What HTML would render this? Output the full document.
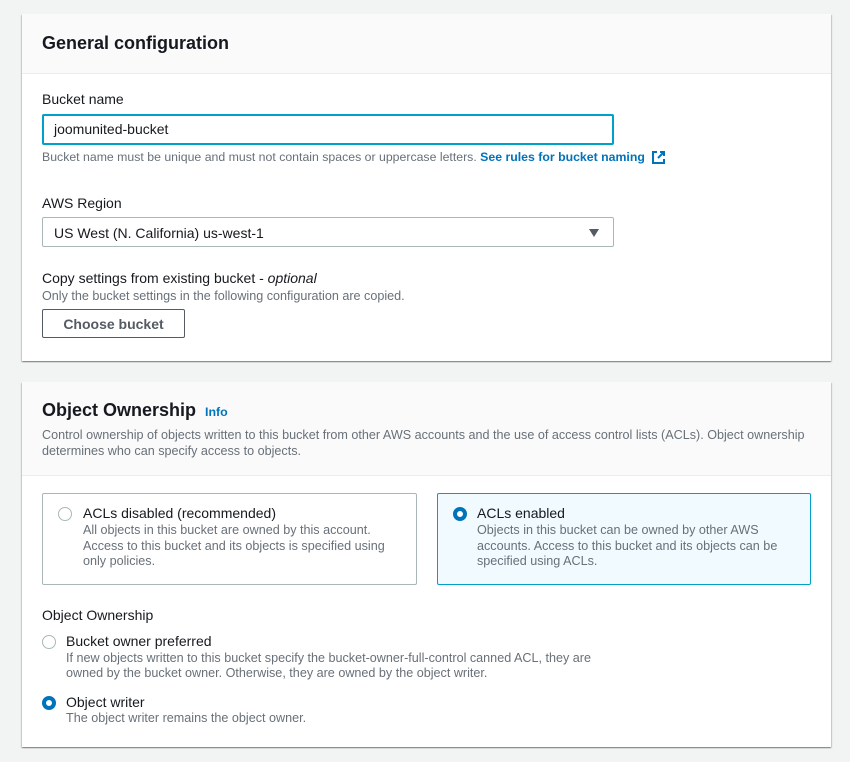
<!DOCTYPE html>
<html><head><meta charset="utf-8"><style>
*{margin:0;padding:0;box-sizing:border-box}
body{width:850px;height:762px;background:#f2f3f3;font-family:"Liberation Sans",Arial,sans-serif;color:#16191f;position:relative;overflow:hidden}
.card{position:absolute;left:22px;width:809px;background:#fff;box-shadow:0 1px 1px rgba(0,28,36,.35),1px 1px 1px rgba(0,28,36,.15),-1px 1px 1px rgba(0,28,36,.15)}
.hdr{position:absolute;left:0;top:0;width:100%;background:#fafafa;border-bottom:1px solid #eaeded}
.t{position:absolute;white-space:nowrap}
.s{font-size:12.6px;color:#687078}
.l{font-size:14px;color:#16191f}
.box{position:absolute;border:1px solid #aab7b8;border-radius:2px;background:#fff}
.radio{position:absolute;width:14px;height:14px;border-radius:50%;border:1.5px solid #aab7b8;background:#fff}
.radio.on{border:4px solid #0073bb}
</style></head><body>

<div class="card" style="top:14px;height:347px">
  <div class="hdr" style="height:60px"></div>
  <div class="t" style="left:20px;top:19px;font-size:18px;font-weight:bold">General configuration</div>
  <div class="t l" style="left:20px;top:77px">Bucket name</div>
  <div class="box" style="left:20px;top:100px;width:572px;height:31px;border:2px solid #00a1c9"></div>
  <div class="t l" style="left:32px;top:107px">joomunited-bucket</div>
  <div class="t s" style="left:20px;top:136px;font-size:12.3px">Bucket name must be unique and must not contain spaces or uppercase letters. <b style="color:#0073bb">See rules for bucket naming</b><svg style="vertical-align:-4px;margin-left:6px" width="15" height="15" viewBox="0 0 15 15"><path d="M6 2H2v11h11V9" fill="none" stroke="#0073bb" stroke-width="2"/><path d="M9 2h4v4M13 2L7 8" fill="none" stroke="#0073bb" stroke-width="2"/></svg></div>
  <div class="t l" style="left:20px;top:181px">AWS Region</div>
  <div class="box" style="left:20px;top:203px;width:572px;height:30px"></div>
  <div class="t l" style="left:32px;top:211px">US West (N. California) us-west-1</div>
  <div style="position:absolute;left:567px;top:215px;width:0;height:0;border-left:5px solid transparent;border-right:5px solid transparent;border-top:8px solid #545b64"></div>
  <div class="t l" style="left:20px;top:256px">Copy settings from existing bucket - <i>optional</i></div>
  <div class="t s" style="left:20px;top:275px">Only the bucket settings in the following configuration are copied.</div>
  <div class="box" style="left:20px;top:295px;width:143px;height:29px;border:1px solid #545b64"></div>
  <div class="t" style="left:20px;top:302px;width:143px;text-align:center;font-size:14px;font-weight:bold;color:#545b64">Choose bucket</div>
</div>

<div class="card" style="top:382px;height:365px">
  <div class="hdr" style="height:94px"></div>
  <div class="t" style="left:20px;top:18px;font-size:18px;font-weight:bold">Object Ownership <span style="font-size:12.4px;color:#0073bb;margin-left:4px">Info</span></div>
  <div class="t s" style="left:20px;top:45px;line-height:16px">Control ownership of objects written to this bucket from other AWS accounts and the use of access control lists (ACLs). Object ownership<br>determines who can specify access to objects.</div>

  <div class="box" style="left:20px;top:111px;width:375px;height:92px"></div>
  <div class="radio" style="left:36px;top:125px"></div>
  <div class="t l" style="left:61px;top:123px">ACLs disabled (recommended)</div>
  <div class="t s" style="left:61px;top:141px;line-height:15.5px">All objects in this bucket are owned by this account.<br>Access to this bucket and its objects is specified using<br>only policies.</div>

  <div class="box" style="left:415px;top:111px;width:374px;height:92px;background:#f1faff;border-color:#00a1c9"></div>
  <div class="radio on" style="left:431px;top:125px"></div>
  <div class="t l" style="left:455px;top:123px">ACLs enabled</div>
  <div class="t s" style="left:455px;top:141px;line-height:15.5px">Objects in this bucket can be owned by other AWS<br>accounts. Access to this bucket and its objects can be<br>specified using ACLs.</div>

  <div class="t l" style="left:20px;top:225px">Object Ownership</div>
  <div class="radio" style="left:20px;top:253px"></div>
  <div class="t l" style="left:44px;top:251px">Bucket owner preferred</div>
  <div class="t s" style="left:44px;top:269px;line-height:15px">If new objects written to this bucket specify the bucket-owner-full-control canned ACL, they are<br>owned by the bucket owner. Otherwise, they are owned by the object writer.</div>
  <div class="radio on" style="left:20px;top:314px"></div>
  <div class="t l" style="left:44px;top:312px">Object writer</div>
  <div class="t s" style="left:44px;top:329px">The object writer remains the object owner.</div>
</div>
</body></html>
